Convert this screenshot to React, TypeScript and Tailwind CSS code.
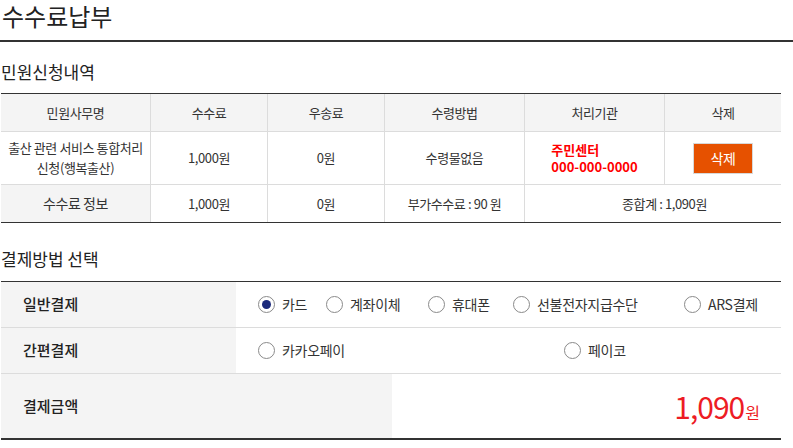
import React from "react";

const font = { fontFamily: '"Noto Sans CJK KR", "Noto Sans", sans-serif' };

function Radio({ checked = false, label }: { checked?: boolean; label: string }) {
  return (
    <div className="flex items-center">
      <span className="w-[17px] h-[17px] rounded-full border border-[#8a8a8a] bg-white flex items-center justify-center shrink-0">
        {checked && <span className="w-[9px] h-[9px] rounded-full bg-[#1b2a7b]" />}
      </span>
      <span className="ml-[7px] text-[14px] text-[#333] tracking-[-0.3px]">{label}</span>
    </div>
  );
}

export default function App() {
  const cell = "flex items-center justify-center text-[13px] text-[#333] tracking-[-0.4px] border-l border-[#dcdcdc] first:border-l-0";
  return (
    <div className="w-[793px] h-[448px] bg-white overflow-hidden" style={font}>
      <div className="h-[42px] border-b-2 border-[#333] pl-[2px]">
        <h1 className="text-[24px] leading-[32px] text-[#222] font-normal">수수료납부</h1>
      </div>
      <div className="pt-[18px] pb-[9px] text-[17px] leading-[24px] text-[#222] pl-[1px]">민원신청내역</div>

      <div className="ml-[1px] w-[780px] border-t border-[#333] border-b">
        <div className="grid grid-cols-[149px_117px_117px_140px_140px_117px] h-[38px] bg-[#f4f4f4] border-b border-[#dcdcdc]">
          <div className={cell}>민원사무명</div>
          <div className={cell}>수수료</div>
          <div className={cell}>우송료</div>
          <div className={cell}>수령방법</div>
          <div className={cell}>처리기관</div>
          <div className={cell}>삭제</div>
        </div>
        <div className="grid grid-cols-[149px_117px_117px_140px_140px_117px] h-[53px] border-b border-[#dcdcdc]">
          <div className={cell + " text-center leading-[20px] px-[2px]"}>
            <span>출산 관련 서비스 통합처리<br />신청(행복출산)</span>
          </div>
          <div className={cell}>1,000원</div>
          <div className={cell}>0원</div>
          <div className={cell}>수령물없음</div>
          <div className={cell}>
            <div className="text-left text-[#ff0000] font-bold text-[13px] leading-[17px] tracking-[0px]">
              <div>주민센터</div>
              <div>000-000-0000</div>
            </div>
          </div>
          <div className={cell}>
            <button className="w-[60px] h-[31px] bg-[#e65100] border border-[#d8d8d8] text-white text-[14px]">삭제</button>
          </div>
        </div>
        <div className="grid grid-cols-[149px_117px_117px_140px_280px] h-[37px]">
          <div className={cell + " bg-[#f4f4f4] text-[14px]"}>수수료 정보</div>
          <div className={cell}>1,000원</div>
          <div className={cell}>0원</div>
          <div className={cell}>부가수수료 : 90 원</div>
          <div className={cell}>종합계 : 1,090원</div>
        </div>
      </div>

      <div className="pt-[24px] pb-[10px] text-[17px] leading-[24px] text-[#222] pl-[1px]">결제방법 선택</div>

      <div className="ml-[1px] w-[780px] border-t border-[#333] border-b-2">
        <div className="flex h-[46px] border-b border-[#dcdcdc]">
          <div className="w-[235px] bg-[#f4f4f4] flex items-center pl-[22px] text-[15px] font-medium text-[#222]">일반결제</div>
          <div className="flex items-center pl-[22px]">
            <div className="w-[68px]"><Radio checked label="카드" /></div>
            <div className="w-[102px]"><Radio label="계좌이체" /></div>
            <div className="w-[85px]"><Radio label="휴대폰" /></div>
            <div className="w-[171px]"><Radio label="선불전자지급수단" /></div>
            <div><Radio label="ARS결제" /></div>
          </div>
        </div>
        <div className="flex h-[46px] border-b border-[#dcdcdc]">
          <div className="w-[235px] bg-[#f4f4f4] flex items-center pl-[22px] text-[15px] font-medium text-[#222]">간편결제</div>
          <div className="flex items-center pl-[22px]">
            <div className="w-[306px]"><Radio label="카카오페이" /></div>
            <div><Radio label="페이코" /></div>
          </div>
        </div>
        <div className="flex h-[64px]">
          <div className="w-[391px] bg-[#f4f4f4] flex items-center pl-[22px] text-[15px] font-medium text-[#222]">결제금액</div>
          <div className="flex-1 flex items-center justify-end pr-[21px] text-[#ed1c24]">
            <span className="flex items-baseline">
              <span className="text-[30px] tracking-[-1px]">1,090</span>
              <span className="text-[16px] ml-[1px]">원</span>
            </span>
          </div>
        </div>
      </div>
    </div>
  );
}
